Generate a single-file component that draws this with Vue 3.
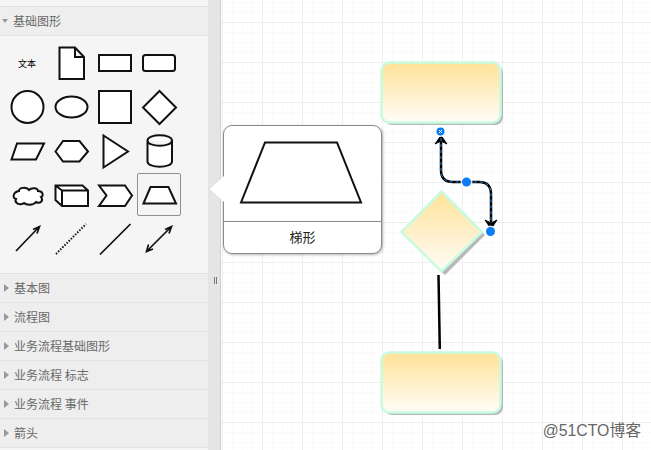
<script setup>
const cats = ['基本图', '流程图', '业务流程基础图形', '业务流程 标志', '业务流程 事件', '箭头']
</script>

<template>
  <div class="app">
    <aside class="sidebar">
      <div class="top"></div>
      <div class="head open"><i class="tri-down"></i><span>基础图形</span></div>
      <div class="panel">
        <div class="shapes">
          <div class="cell textcell"><span>文本</span></div>
          <div class="cell"><svg viewBox="49 44 44 43"><path d="M59.500 47.500H75L84 57V79H59.500Z M75 47.500V57H84"/></svg></div>
          <div class="cell"><svg viewBox="93 44 44 43"><rect x="99" y="55" width="32" height="16"/></svg></div>
          <div class="cell"><svg viewBox="137 44 44 43"><rect x="143" y="55" width="32" height="16" rx="2.500"/></svg></div>

          <div class="cell"><svg viewBox="5 87 44 43"><circle cx="27.500" cy="107" r="16"/></svg></div>
          <div class="cell"><svg viewBox="49 87 44 43"><ellipse cx="71.500" cy="107" rx="16" ry="10.500"/></svg></div>
          <div class="cell"><svg viewBox="93 87 44 43"><rect x="99" y="91" width="32" height="32"/></svg></div>
          <div class="cell"><svg viewBox="137 87 44 43"><path d="M159.500 91L176 107.500L159.500 124L143 107.500Z"/></svg></div>

          <div class="cell"><svg viewBox="5 130 44 43"><path d="M11.500 159.500L17 143.500H44L36 159.500Z"/></svg></div>
          <div class="cell"><svg viewBox="49 130 44 43"><path d="M55.500 151.500L63 141H79.500L88 151.500L79.500 161.500H63Z"/></svg></div>
          <div class="cell"><svg viewBox="93 130 44 43"><path d="M103.500 135.500L128 151.500L103.500 167.500Z"/></svg></div>
          <div class="cell"><svg viewBox="137 130 44 43"><path d="M147.500 140.500C147.500 133.500 172 133.500 172 140.500V161.500C172 168.500 147.500 168.500 147.500 161.500Z M147.500 140.500C147.500 147.500 172 147.500 172 140.500"/></svg></div>

          <div class="cell"><svg viewBox="5 173 44 43"><path d="M19 191C19 187 27 187 29 190C32 187 38 188 38 191C43 191 44 196 41 197C44 201 40 204 36 202C33 206 26 205 24 203C20 206 14 203 16 199C12 198 13 192 19 191Z"/></svg></div>
          <div class="cell"><svg viewBox="49 173 44 43"><path d="M55.500 185.500H82.500L88 190.500V206H62L55.500 200Z M62 206V190.500H88 M62 190.500L55.500 185.500"/></svg></div>
          <div class="cell"><svg viewBox="93 173 44 43"><path d="M99 185.500H125L132 195.500L125 206H99L106.500 195.500Z"/></svg></div>
          <div class="cell selected"><svg viewBox="137 173 44 43"><path d="M143.500 203.500L150.500 187H168.500L176 203.500Z"/></svg></div>

          <div class="cell thin"><svg viewBox="5 216 44 43"><path d="M16 251L39 227M33 229.500L39.500 226.500L37 233.500" /></svg></div>
          <div class="cell thin"><svg viewBox="49 216 44 43"><path class="dots" d="M56 254L86 224"/></svg></div>
          <div class="cell thin"><svg viewBox="93 216 44 43"><path d="M100 254.500L130.500 224"/></svg></div>
          <div class="cell thin"><svg viewBox="137 216 44 43"><path d="M147 251L171 227M165 229.500L171.500 226.500L169 233.500M148.500 244.500L146.500 251.500L153 249"/></svg></div>
        </div>
      </div>
      <div v-for="c in cats" :key="c" class="head"><i class="tri-right"></i><span>{{ c }}</span></div>
    </aside>

    <div class="splitter"><span class="grip"></span></div>

    <main class="canvas">
      <svg class="diagram" viewBox="221 0 430 450">
        <defs>
          <linearGradient id="fill" x1="0" y1="0" x2="0" y2="1">
            <stop offset="0.08" stop-color="#ffe4a0"/>
            <stop offset="1" stop-color="#fffdf8"/>
          </linearGradient>
        </defs>

        <rect class="shadow" x="384" y="65" width="119" height="60" rx="8"/>
        <rect class="node" x="381.500" y="62.500" width="119" height="60" rx="8"/>

        <path class="shadow" d="M442.500 194L485 235L445 275L404 235Z"/>
        <path class="node" d="M441.500 191.500L482 232L441.500 271.500L401.500 232Z"/>

        <rect class="shadow" x="384" y="355" width="119" height="60" rx="8"/>
        <rect class="node" x="381.500" y="352.500" width="119" height="60" rx="8"/>

        <path class="edge" d="M438.500 275L439.800 349"/>

        <path class="conn" d="M441 138V170Q441 182 453 182H479Q491 182 491 194V222"/>
        <path class="conn-head" d="M435 144L441 135.500L447 144L441 141Z"/>
        <path class="conn-head" d="M485 220L491 229L497 220L491 223Z"/>
        <path class="conn-dash" d="M441 138V170Q441 182 453 182H479Q491 182 491 194V222"/>

        <circle class="ring" cx="440.500" cy="131.500" r="5.500"/>
        <circle class="dot" cx="440.500" cy="131.500" r="4"/>
        <path class="x" d="M439 130L442 133M442 130L439 133"/>
        <circle class="ring" cx="466.500" cy="182" r="6"/>
        <circle class="dot" cx="466.500" cy="182" r="4.500"/>
        <circle class="ring" cx="490.500" cy="231.500" r="6"/>
        <circle class="dot" cx="490.500" cy="231.500" r="4.500"/>
      </svg>
      <div class="watermark">@51CTO博客</div>
    </main>

    <div class="tooltip">
      <i class="pointer"></i>
      <div class="preview">
        <svg viewBox="0 0 157 95"><path d="M16 76.500L40 16.500H112L136 76.500Z"/></svg>
      </div>
      <div class="label">梯形</div>
    </div>
  </div>
</template>

<style>
html, body { margin: 0; padding: 0; }
</style>

<style scoped>
.app {
  position: relative;
  display: flex;
  width: 651px;
  height: 450px;
  overflow: hidden;
  font-family: "Noto Sans CJK SC", "Liberation Sans", sans-serif;
}
.sidebar {
  width: 208px;
  flex: none;
  background: #f5f5f5;
  overflow: hidden;
}
.top {
  height: 6px;
  background: #f5f5f5;
  border-bottom: 1px solid #e2e2e2;
}
.head {
  box-sizing: border-box;
  height: 29px;
  display: flex;
  align-items: center;
  background: #eeeeee;
  border-bottom: 1px solid #e2e2e2;
  color: #6a6a6a;
  font-size: 12px;
  padding-left: 4px;
  padding-bottom: 1px;
}
.head span { margin-left: 5px; white-space: pre; }
.head.open { padding-left: 2px; }
.head.open span { margin-left: 5px; }
.tri-down {
  width: 0;
  height: 0;
  border-left: 3.500px solid transparent;
  border-right: 3.500px solid transparent;
  border-top: 4px solid #999;
}
.tri-right {
  width: 0;
  height: 0;
  border-top: 4.500px solid transparent;
  border-bottom: 4.500px solid transparent;
  border-left: 5px solid #999;
}
.panel {
  height: 238px;
  box-sizing: border-box;
  padding: 8px 0 0 5px;
  background: #f5f5f5;
  border-bottom: 1px solid #e2e2e2;
}
.shapes {
  display: grid;
  grid-template-columns: repeat(4, 44px);
  grid-auto-rows: 43px;
}
.cell {
  display: flex;
  align-items: center;
  justify-content: center;
  box-sizing: border-box;
  position: relative;
}
.cell svg {
  position: absolute;
  inset: 0;
  width: 44px;
  height: 43px;
}
.cell svg * {
  fill: #fff;
  stroke: #111;
  stroke-width: 2;
}
.cell.thin svg * { fill: none; stroke-width: 1.700; }
.cell svg .dots { stroke-dasharray: 1.500 1.500; stroke-width: 2; }
.textcell span {
  font-size: 9px;
  color: #000;
  margin-bottom: 5px;
}
.selected {
  border: 1px solid #8f8f8f;
  border-radius: 2px;
}
.selected svg { inset: -1px; }
.splitter {
  width: 13px;
  flex: none;
  background: #e5e5e5;
  border-right: 1px solid #cfcfcf;
  box-sizing: border-box;
  position: relative;
}
.grip {
  position: absolute;
  left: 6px;
  top: 277px;
  width: 1px;
  height: 7px;
  border-left: 1px solid #777;
  border-right: 1px solid #777;
}
.canvas {
  position: relative;
  flex: 1;
  background-color: #fff;
  background-image:
    linear-gradient(#eeeeee 1px, transparent 1px),
    linear-gradient(90deg, #eeeeee 1px, transparent 1px),
    linear-gradient(#fafafa 1px, transparent 1px),
    linear-gradient(90deg, #fafafa 1px, transparent 1px);
  background-size: 40px 40px, 40px 40px, 10px 10px, 10px 10px;
  background-position: 0 22px, 1px 0, 0 2px, 1px 0;
}
.diagram {
  position: absolute;
  inset: 0;
  width: 430px;
  height: 450px;
}
.shadow { fill: #b8b8b8; }
.node { fill: url(#fill); stroke: #c8fbe0; stroke-width: 2.500; }
.edge { fill: none; stroke: #000; stroke-width: 2.500; }
.conn { fill: none; stroke: #000; stroke-width: 2.500; }
.conn-head { fill: #000; stroke: #000; stroke-width: 1; }
.conn-dash { fill: none; stroke: #1e8cf0; stroke-width: 1; stroke-dasharray: 3 3; }
.ring { fill: #fff; opacity: 0.85; }
.dot { fill: #0a7cf5; }
.x { stroke: #fff; stroke-width: 1; fill: none; }
.watermark {
  position: absolute;
  right: 10px;
  bottom: 9px;
  color: #666;
  font-family: "Liberation Sans", "Noto Sans CJK SC", sans-serif;
  font-size: 15.800px;
  line-height: 20px;
  white-space: nowrap;
}
.tooltip {
  position: absolute;
  left: 223px;
  top: 125px;
  width: 159px;
  height: 129px;
  box-sizing: border-box;
  background: #fff;
  border: 1px solid #8a8a8a;
  border-radius: 9px;
  box-shadow: 1px 1px 3px rgba(0, 0, 0, 0.28);
  display: flex;
  flex-direction: column;
}
.pointer {
  position: absolute;
  left: -14px;
  top: 50px;
  width: 0;
  height: 0;
  border-top: 13px solid transparent;
  border-bottom: 13px solid transparent;
  border-right: 14px solid #fff;
}
.preview {
  height: 95px;
  border-bottom: 1px solid #8a8a8a;
}
.preview svg { display: block; width: 157px; height: 95px; margin-left: 1px; }
.preview path { fill: #fff; stroke: #111; stroke-width: 2; }
.label {
  flex: 1;
  display: flex;
  align-items: center;
  justify-content: center;
  font-size: 13px;
  color: #222;
  padding-bottom: 3px;
}
</style>
